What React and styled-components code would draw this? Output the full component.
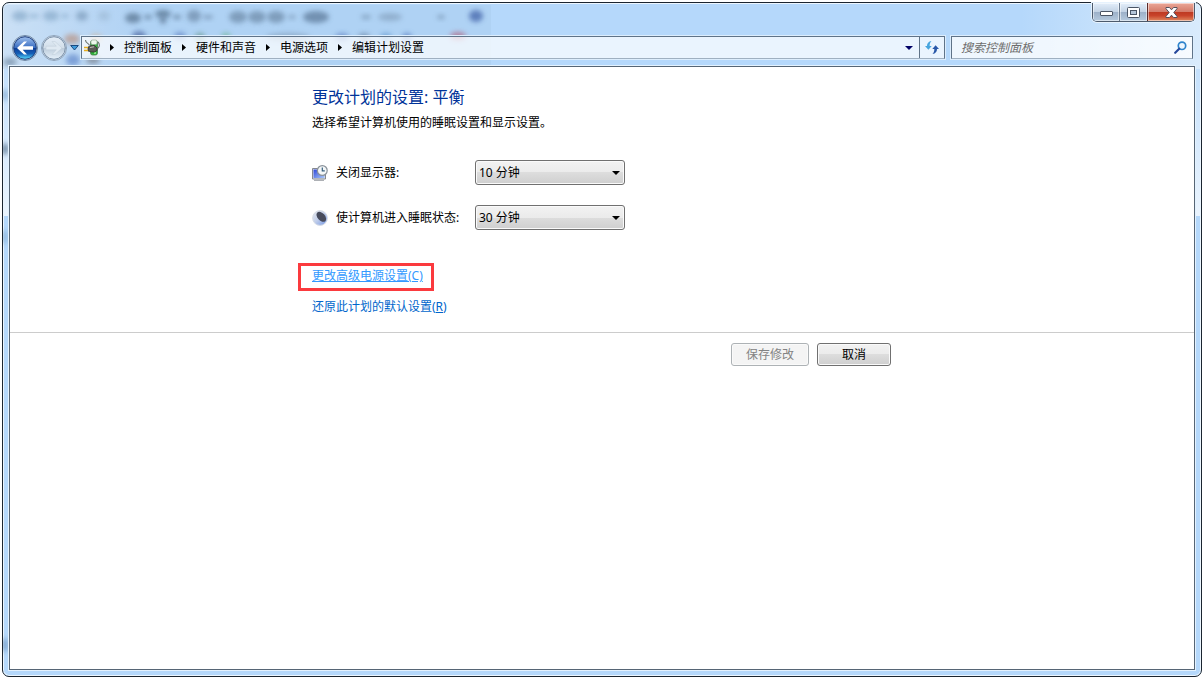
import React, { useState } from 'react'
import styled, { createGlobalStyle } from 'styled-components'

const crumbs = ['控制面板', '硬件和声音', '电源选项', '编辑计划设置']
const times = ['1 分钟', '2 分钟', '5 分钟', '10 分钟', '15 分钟', '30 分钟', '1 小时', '从不']

// shapes of the toolbar that shows through the glass: x, y, rx, ry, colour
const shadows = [
    [20, 16, 8, 5, '#8fb0cf'], [34, 16, 5, 2, '#8fb0cf'],
    [51, 16, 8, 5, '#8fb0cf'], [65, 16, 4, 2, '#8fb0cf'],
    [82, 16, 6, 5, '#84a3c2'], [104, 16, 6, 5, '#a2bfdb'],
    [133, 18, 8, 5, '#5e7b98'], [148, 17, 4, 2, '#5e7b98'],
    [163, 14, 8, 4, '#5e7b98'], [163, 20, 3, 4, '#5e7b98'], [177, 17, 4, 2, '#5e7b98'],
    [194, 16, 7, 6, '#7592b0'], [208, 17, 5, 2, '#7592b0'],
    [238, 17, 9, 6, '#7391af'], [257, 17, 9, 6, '#7391af'], [276, 17, 9, 6, '#7391af'],
    [292, 17, 4, 2, '#7e9bb9'],
    [316, 17, 13, 6, '#6381a1'], [366, 17, 5, 2, '#7896b4'],
    [390, 17, 12, 4, '#8aa8c6'], [441, 17, 4, 2, '#7896b4'],
    [476, 16, 7, 6, '#4a6bae'], [72, 39, 8, 5, '#b99c92'],
    [96, 38, 6, 4, '#cdb9a3'], [139, 36, 7, 5, '#5671a8'],
    [180, 36, 6, 4, '#6c8dc9'], [200, 37, 5, 4, '#6a9a90'],
    [226, 36, 5, 3, '#71b596'], [288, 37, 22, 4, '#8aa7c4'],
    [342, 37, 7, 4, '#6c8dc9'], [364, 37, 6, 4, '#7592b0'],
    [386, 37, 6, 4, '#6c9ed0'], [407, 37, 5, 4, '#5f83c4'],
    [458, 36, 8, 4, '#b0718c'], [73, 60, 7, 6, '#6d93d0'],
    [10, 62, 7, 4, '#7a93ab'], [93, 60, 7, 4, '#7f8794'],
    [5, 95, 4, 6, '#8fb3d6'], [5, 149, 4, 6, '#66809a'],
    [5, 237, 4, 7, '#93b9de'], [5, 645, 4, 7, '#7ba3cb'],
]

const Backdrop = () => (
    <BackdropArt aria-hidden="true">
        <defs>
            <filter id="haze" x="-80%" y="-80%" width="260%" height="260%">
                <feGaussianBlur stdDeviation="2.500" />
            </filter>
        </defs>
        <rect x="0" y="2" width="488" height="64" fill="#9fc0e0" opacity="0.25" />
        {shadows.map(([x, y, rx, ry, fill], i) => (
            <ellipse key={i} cx={x - 3} cy={y - 3} rx={rx} ry={ry} fill={fill} opacity="0.8" filter="url(#haze)" />
        ))}
    </BackdropArt>
)

const CaptionButtons = () => (
    <Caption>
        <CaptionButton aria-label="最小化" $width={27}>
            <svg width="13" height="7" viewBox="0 0 13 7">
                <rect x="0.5" y="2.5" width="12" height="4" rx="0.500" fill="#fff" stroke="#4b5565" />
            </svg>
        </CaptionButton>
        <CaptionButton aria-label="最大化" $width={27}>
            <svg width="13" height="11" viewBox="0 0 13 11">
                <rect x="0.5" y="0.5" width="12" height="10" rx="1" fill="#fff" stroke="#4b5565" />
                <rect x="3.5" y="3.5" width="6" height="4" fill="#b4c5d8" stroke="#4b5565" />
            </svg>
        </CaptionButton>
        <CaptionButton aria-label="关闭" $width={47} $close>
            <svg width="13" height="11" viewBox="0 0 13 11">
                <path d="M1 .5h3.500l2 2.300 2-2.300H12v1.200L8.800 5.500 12 9.300v1.200H8.500l-2-2.300-2 2.300H1V9.300l3.200-3.800L1 1.700z" fill="#fff" stroke="#54505c" />
            </svg>
        </CaptionButton>
    </Caption>
)

const TravelButtons = () => (
    <Travel>
        <RoundButton aria-label="后退">
            <svg width="26" height="26" viewBox="0 0 26 26">
                <defs>
                    <linearGradient id="backFill" x1="0" y1="0" x2="0" y2="1">
                        <stop offset="0" stopColor="#9fc0ee" />
                        <stop offset="0.48" stopColor="#3a6ec2" />
                        <stop offset="0.5" stopColor="#0c3c96" />
                        <stop offset="0.75" stopColor="#1560b8" />
                        <stop offset="1" stopColor="#5ce0ff" />
                    </linearGradient>
                </defs>
                <circle cx="13" cy="13" r="12.500" fill="#dcebfa" stroke="#6d86a3" />
                <circle cx="13" cy="13" r="11.300" fill="url(#backFill)" stroke="#1d3d7c" />
                <path d="M5 13l7-6.500h3l-4.300 4.700H21v3.600H10.700L15 19.500h-3z" fill="#fff" />
            </svg>
        </RoundButton>
        <RoundButton aria-label="前进">
            <svg width="26" height="26" viewBox="0 0 26 26">
                <defs>
                    <linearGradient id="nextFill" x1="0" y1="0" x2="0" y2="1">
                        <stop offset="0" stopColor="#e4eef8" />
                        <stop offset="0.48" stopColor="#d3dfea" />
                        <stop offset="0.5" stopColor="#bccbda" />
                        <stop offset="1" stopColor="#e6f1fa" />
                    </linearGradient>
                </defs>
                <circle cx="13" cy="13" r="12.500" fill="#e4eff9" stroke="#8ea3ba" />
                <circle cx="13" cy="13" r="11.300" fill="url(#nextFill)" stroke="#768ca5" />
                <path d="M21 13l-7-6.500h-3l4.300 4.700H5v3.600h10.300L11 19.500h3z" fill="#dfe9f2" stroke="#c3d0dc" strokeWidth="0.600" />
            </svg>
        </RoundButton>
        <RecentButton aria-label="最近浏览的页面">
            <svg width="9" height="6" viewBox="0 0 9 6">
                <path d="M.7.5h7.600L4.500 5z" fill="#3f9bdc" stroke="#1c4a80" />
            </svg>
        </RecentButton>
    </Travel>
)

const PlugIcon = () => (
    <svg width="16" height="17" viewBox="0 0 16 17">
        <rect x="6.500" y="1.500" width="7" height="14.500" rx="2" fill="#2fb53c" stroke="#4c7a50" strokeWidth="0.800" />
        <rect x="7" y="1" width="6" height="4.500" rx="1.500" fill="#eef8ec" stroke="#8ea38f" strokeWidth="0.600" />
        <path d="M8.500 6v3M10 14h2" stroke="#a4f09c" strokeWidth="1.500" />
        <path d="M1.500 1c0 3.500 3 2.500 4 5.500M12.500 10c3.500-1 3.500-5 1.500-7" fill="none" stroke="#6b746e" strokeWidth="1.100" />
        <path d="M4 8l3.500-1.500h3L13 9v2.500L10.500 13h-3L4 12z" fill="#5b5a55" stroke="#2c2b27" strokeWidth="0.700" />
        <path d="M6 8.500l4-.7" stroke="#c2c1ba" />
        <path d="M0 8.500h4M0 11.500h4" stroke="#e8ae1e" strokeWidth="1.600" />
    </svg>
)

const CrumbArrow = () => (
    <svg width="4" height="7" viewBox="0 0 4 7">
        <path d="M0 0l4 3.500L0 7z" fill="#000" />
    </svg>
)

const DownArrow = ({ color = '#000' }) => (
    <svg width="8" height="4" viewBox="0 0 8 4">
        <path d="M0 0h8L4 4z" fill={color} />
    </svg>
)

const RefreshIcon = () => (
    <svg width="14" height="13" viewBox="0 0 14 13">
        <path d="M0 5h2c0-2.800 1.500-4.500 4.500-5C5.200 1.400 4.600 2.800 4.700 5h2L3.400 8.800z" fill="#46a5de" />
        <path d="M14 8h-2c0 2.800-1.500 4.500-4.500 5 1.300-1.400 1.900-2.800 1.800-5h-2l3.300-3.800z" fill="#2857a8" />
    </svg>
)

const SearchIcon = () => (
    <svg width="13" height="13" viewBox="0 0 13 13">
        <circle cx="8" cy="4.800" r="3.700" fill="#eef7ff" stroke="#2f84cc" strokeWidth="1.700" />
        <path d="M5.200 7.700L1.200 11.800" stroke="#26479b" strokeWidth="2.100" strokeLinecap="round" />
    </svg>
)

const DisplayIcon = () => (
    <svg width="16" height="16" viewBox="0 0 16 16">
        <defs>
            <linearGradient id="screenFill" x1="0" y1="0" x2="1" y2="1">
                <stop offset="0" stopColor="#2f48d8" />
                <stop offset="1" stopColor="#a9c8fa" />
            </linearGradient>
        </defs>
        <path d="M.5 3.500h13v10.500H.5z" fill="#e3e5ea" stroke="#85888f" />
        <path d="M1.500 4.500h11v8.500h-11z" fill="url(#screenFill)" />
        <path d="M2 15.300h10" stroke="#a4a7ad" strokeWidth="1.200" />
        <circle cx="10.300" cy="5.500" r="4.900" fill="#f4f7f8" stroke="#8a929a" strokeWidth="1.200" />
        <path d="M10.300 2.500v3.300h2.500" fill="none" stroke="#37607e" strokeWidth="1.200" />
    </svg>
)

const MoonIcon = () => (
    <svg width="16" height="16" viewBox="0 0 16 16">
        <defs>
            <linearGradient id="moonFill" x1="0" y1="0" x2="1" y2="1">
                <stop offset="0" stopColor="#e6e8ec" />
                <stop offset="0.45" stopColor="#c4d0ea" />
                <stop offset="1" stopColor="#6f94e4" />
            </linearGradient>
        </defs>
        <circle cx="8" cy="8" r="7.400" fill="url(#moonFill)" stroke="#d8dde6" />
        <ellipse cx="9.300" cy="6.800" rx="3.700" ry="5.900" transform="rotate(-42 9.300 6.800)" fill="#474b5c" />
    </svg>
)

const TimeSelect = ({ id, value, onChange }) => (
    <SelectBox>
        <select id={id} value={value} onChange={(e) => onChange(e.target.value)}>
            {times.map((time) => <option key={time}>{time}</option>)}
        </select>
        <DownArrow />
    </SelectBox>
)

const App = () => {
    const [display, setDisplay] = useState('10 分钟')
    const [sleep, setSleep] = useState('30 分钟')

    return (
        <>
            <GlobalStyle />
            <Window>
                <Backdrop />
                <CaptionButtons />
                <NavRow>
                    <TravelButtons />
                    <AddressBar>
                        <Crumbs>
                            <PlugIcon />
                            {crumbs.map((crumb) => (
                                <React.Fragment key={crumb}>
                                    <CrumbArrow />
                                    <a href="#">{crumb}</a>
                                </React.Fragment>
                            ))}
                        </Crumbs>
                        <BarButton aria-label="以前的位置" $width={20}><DownArrow color="#000066" /></BarButton>
                        <BarButton aria-label="刷新" $width={25} $divided><RefreshIcon /></BarButton>
                    </AddressBar>
                    <SearchBox>
                        <input type="text" aria-label="搜索控制面板" placeholder="搜索控制面板" />
                        <SearchIcon />
                    </SearchBox>
                </NavRow>
                <Panel>
                    <Section>
                        <Column>
                            <h1>更改计划的设置: 平衡</h1>
                            <p>选择希望计算机使用的睡眠设置和显示设置。</p>
                            <Settings>
                                <SettingRow>
                                    <DisplayIcon />
                                    <label htmlFor="display">关闭显示器:</label>
                                    <TimeSelect id="display" value={display} onChange={setDisplay} />
                                </SettingRow>
                                <SettingRow>
                                    <MoonIcon />
                                    <label htmlFor="sleep">使计算机进入睡眠状态:</label>
                                    <TimeSelect id="sleep" value={sleep} onChange={setSleep} />
                                </SettingRow>
                            </Settings>
                            <Links>
                                <TaskLink href="#" $active>更改高级电源设置(C)</TaskLink>
                                <TaskLink href="#">还原此计划的默认设置(<u>R</u>)</TaskLink>
                            </Links>
                        </Column>
                    </Section>
                    <Footer>
                        <PushButton $width={78} disabled>保存修改</PushButton>
                        <PushButton $width={74}>取消</PushButton>
                    </Footer>
                </Panel>
            </Window>
        </>
    )
}

export default App

const GlobalStyle = createGlobalStyle`
    *{
        box-sizing: border-box;
    }
    body{
        margin: 0;
        padding: 2px;
        background: #fff;
    }
    body, button, input, select{
        font-family: "Noto Sans", "Noto Sans CJK SC", sans-serif;
        font-size: 12px;
        line-height: 16px;
        color: #000;
    }
    button{
        padding: 0;
    }
    svg{
        display: block;
        flex-shrink: 0;
    }
`

const Window = styled.div`
    position: relative;
    display: flex;
    flex-direction: column;
    min-height: calc(100vh - 4px);
    padding: 0 6px 6px;
    border: 1px solid #1b2530;
    border-radius: 7px;
    background:
        linear-gradient(90deg, #d9ebfc 0, #d9ebfc00 140px, #d9ebfc00 calc(100% - 180px), #d9ebfc 100%) 0 0 / 100% 66px no-repeat,
        linear-gradient(#c4e0fc, #eaf4fe) 0 66px / 100% 147px no-repeat,
        #b5d8fb;
    box-shadow: inset 0 0 0 1px #ecf6ff;
`

const BackdropArt = styled.svg`
    position: absolute;
    inset: 0;
    width: 100%;
    height: 100%;
    border-radius: 7px;
    pointer-events: none;
`

const Caption = styled.div`
    position: relative;
    display: flex;
    align-self: flex-end;
    height: 19px;
    border: 1px solid #4c5a6c;
    border-top: 0;
    border-radius: 0 0 5px 5px;
    overflow: hidden;
    box-shadow: 0 0 0 1px #e6f2fd;
`

const CaptionButton = styled.button`
    display: flex;
    align-items: center;
    justify-content: center;
    width: ${({ $width }) => $width}px;
    border: 0;
    border-left: ${({ $close }) => ($close ? '1px solid #5a2a2a' : '0')};
    border-right: ${({ $close }) => ($close ? '0' : '1px solid #6b7b8e')};
    background: ${({ $close }) => ($close
        ? 'linear-gradient(#eba798, #d47b6a 48%, #bd3921 50%, #c8432a 70%, #e08a60)'
        : 'linear-gradient(#e3eefa, #c3d3e5 48%, #9cb0c8 50%, #b6cade)')};
    box-shadow: inset 0 0 0 1px #ffffff80;
    &:nth-child(2){
        border-right: 0;
    }
`

const NavRow = styled.div`
    position: relative;
    display: flex;
    align-items: center;
    height: 25px;
    margin: 13px 2px 6px 3px;
`

const Travel = styled.div`
    display: flex;
    align-items: center;
    gap: 3px;
    width: 69px;
`

const RoundButton = styled.button`
    display: flex;
    border: 0;
    border-radius: 50%;
    background: none;
`

const RecentButton = styled.button`
    border: 0;
    background: none;
`

const AddressBar = styled.div`
    display: flex;
    flex: 1;
    height: 23px;
    border: 1px solid #5f7388;
    border-bottom-color: #9fb0c1;
    background: #ffffffb8;
    box-shadow: 0 0 0 1px #dcedfd;
`

const Crumbs = styled.div`
    display: flex;
    flex: 1;
    align-items: center;
    gap: 10px;
    padding-left: 2px;
    a{
        color: #000;
        text-decoration: none;
        white-space: nowrap;
    }
`

const BarButton = styled.button`
    display: flex;
    align-items: center;
    justify-content: center;
    width: ${({ $width }) => $width}px;
    border: 0;
    border-left: ${({ $divided }) => ($divided ? '1px solid #5f7388' : '0')};
    background: none;
`

const SearchBox = styled.div`
    display: flex;
    align-items: center;
    width: 242px;
    height: 23px;
    margin-left: 6px;
    padding: 0 5px 0 9px;
    border: 1px solid #5f7388;
    border-bottom-color: #9fb0c1;
    background: #ffffffc8;
    box-shadow: 0 0 0 1px #dcedfd;
    input{
        flex: 1;
        min-width: 0;
        padding: 0;
        border: 0;
        outline: 0;
        background: none;
    }
    input::placeholder{
        color: #6d6d6d;
        font-style: italic;
        opacity: 1;
    }
`

const Panel = styled.main`
    position: relative;
    flex: 1;
    border: 1px solid #566575;
    background: #fff;
    box-shadow: 0 0 0 1px #e4f2fe;
`

const Section = styled.section`
    padding: 20px 0 17px;
    border-bottom: 1px solid #ccc;
`

const Column = styled.div`
    max-width: 580px;
    margin: 0 auto;
    h1{
        margin: 0;
        color: #003399;
        font-size: 16px;
        font-weight: normal;
        line-height: 20px;
    }
    p{
        margin: 8px 0 0;
    }
`

const Settings = styled.div`
    display: flex;
    flex-direction: column;
    gap: 20px;
    margin-top: 29px;
`

const SettingRow = styled.div`
    display: grid;
    grid-template-columns: 24px 139px 150px;
    align-items: center;
`

const SelectBox = styled.div`
    position: relative;
    select{
        display: block;
        width: 100%;
        height: 25px;
        padding: 0 20px 0 3px;
        border: 1px solid #707070;
        border-radius: 3px;
        background: linear-gradient(#f2f2f2, #ebebeb 50%, #dddddd 50%, #cfcfcf);
        box-shadow: inset 0 0 0 1px #fafafa;
        appearance: none;
    }
    svg{
        position: absolute;
        top: 11px;
        right: 5px;
        pointer-events: none;
    }
`

const Links = styled.div`
    display: flex;
    flex-direction: column;
    align-items: flex-start;
    gap: 15px;
    margin-top: 38px;
`

const TaskLink = styled.a`
    position: relative;
    color: ${({ $active }) => ($active ? '#3399ff' : '#0066cc')};
    text-decoration: ${({ $active }) => ($active ? 'underline' : 'none')};
    &::after{
        content: '';
        display: ${({ $active }) => ($active ? 'block' : 'none')};
        position: absolute;
        inset: -5px -11px -7px -14px;
        border: 3px solid #fb3a3e;
    }
`

const Footer = styled.footer`
    display: flex;
    justify-content: flex-end;
    gap: 8px;
    max-width: 580px;
    margin: 0 auto;
    padding: 10px 1px 0 0;
`

const PushButton = styled.button`
    width: ${({ $width }) => $width}px;
    height: 23px;
    border: 1px solid #707070;
    border-radius: 3px;
    background: linear-gradient(#f2f2f2, #ebebeb 50%, #dddddd 50%, #cfcfcf);
    box-shadow: inset 0 0 0 1px #fafafa;
    &:disabled{
        border-color: #adb2b5;
        background: #f4f4f4;
        color: #838383;
    }
`
